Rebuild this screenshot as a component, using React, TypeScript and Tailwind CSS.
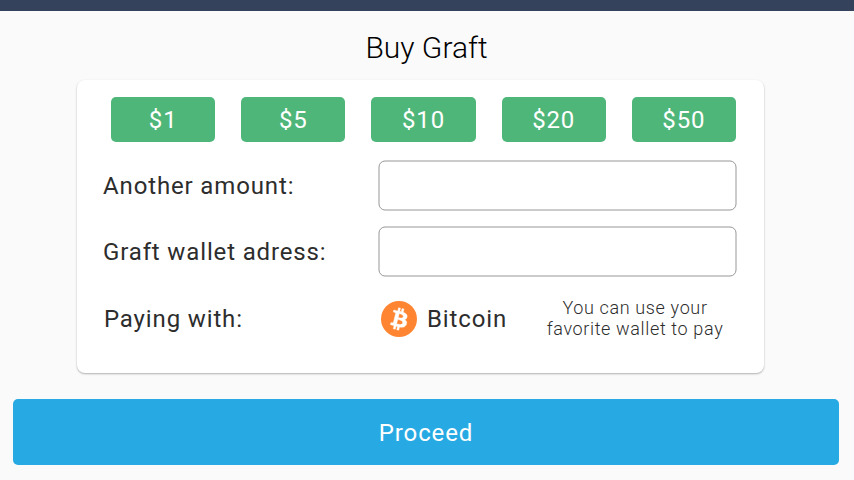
const amounts = ['$1', '$5', '$10', '$20', '$50'];

function BitcoinIcon() {
  return (
    <svg viewBox="0 0 32 32" className="h-9 w-9 shrink-0">
      <circle cx="16" cy="16" r="16" fill="#ff8532" />
      <path
        fill="#fff"
        stroke="#fff"
        strokeWidth="0.4"
        d="M23.189 14.02c.314-2.096-1.283-3.223-3.465-3.975l.708-2.84-1.728-.43-.69 2.765c-.454-.114-.92-.22-1.385-.326l.695-2.783L15.596 6l-.708 2.839c-.376-.086-.746-.17-1.104-.26l.002-.009-2.384-.595-.46 1.846s1.283.294 1.256.312c.7.175.826.638.805 1.006l-.806 3.235c.048.012.11.03.18.057l-.183-.045-1.13 4.532c-.086.212-.303.531-.793.41.018.025-1.256-.313-1.256-.313l-.858 1.978 2.25.561c.418.105.828.215 1.231.318l-.715 2.872 1.727.43.708-2.84c.472.127.93.245 1.378.357l-.706 2.828 1.728.43.715-2.866c2.948.558 5.164.333 6.097-2.333.752-2.146-.037-3.385-1.588-4.192 1.13-.26 1.98-1.003 2.207-2.538zm-3.95 5.538c-.533 2.147-4.148.986-5.32.695l.95-3.805c1.172.293 4.929.872 4.37 3.11zm.535-5.569c-.487 1.953-3.495.96-4.47.717l.86-3.45c.975.243 4.118.696 3.61 2.733z"
      />
    </svg>
  );
}

function Field({ label }: { label: string }) {
  return (
    <div className="flex h-[51px] items-center">
      <span className="w-[275px] shrink-0 whitespace-nowrap">{label}</span>
      <input
        aria-label={label}
        className="h-[50px] w-[358px] translate-x-[0.5px] translate-y-[0.5px] self-start rounded-[6.5px] border border-[#979797] bg-white px-3 outline-none"
      />
    </div>
  );
}

export default function App() {
  return (
    <div className="flex h-[480px] w-[854px] flex-col overflow-hidden bg-[#fafafa] font-['Roboto',sans-serif] text-[#2d2d2d]">
      <header className="h-[11px] shrink-0 bg-[#34425c]" />
      <h1 className="mt-[17px] h-10 pr-px text-center text-[30px] leading-10 font-light text-black">Buy Graft</h1>
      <main className="mt-3 ml-[77px] h-[293px] w-[687px] shrink-0 rounded-[8px] bg-white pt-[17px] text-[24px] leading-7 tracking-[0.86px] shadow-[0_1px_2px_rgba(0,0,0,0.3)]">
        <div className="ml-[34px] flex w-[625px] justify-between">
          {amounts.map((amount) => (
            <button
              key={amount}
              className="h-[45px] w-[104.3px] rounded-[5px] bg-[#4fb67a] text-center text-white"
            >
              {amount}
            </button>
          ))}
        </div>
        <div className="mt-[18px] ml-[26px] flex flex-col gap-[15px]">
          <Field label="Another amount:" />
          <Field label="Graft wallet adress:" />
        </div>
        <div className="mt-5 ml-[27px] flex h-11 items-center">
          <span className="w-[277px] shrink-0">Paying with:</span>
          <BitcoinIcon />
          <span className="ml-[10px] w-[110px] shrink-0">Bitcoin</span>
          <p className="w-[196px] pb-0.5 text-center text-[18px] leading-[21px] font-light tracking-[0.64px]">
            You can use your
            <br />
            favorite wallet to pay
          </p>
        </div>
      </main>
      <button className="mt-[26px] ml-[13px] h-[66px] w-[826px] shrink-0 rounded-[5px] bg-[#27aae3] pt-0.5 text-[24px] tracking-[0.86px] text-white">
        Proceed
      </button>
    </div>
  );
}
